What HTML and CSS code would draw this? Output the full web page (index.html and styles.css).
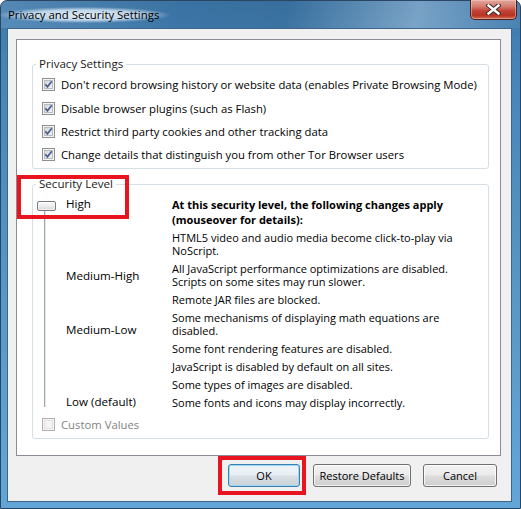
FILE: index.html
```html
<!DOCTYPE html>
<html>
<head>
<meta charset="utf-8">
<link rel="stylesheet" href="styles.css">
</head>
<body>
<div class="window">
  <div class="titlebar">
    <span class="title">Privacy and Security Settings</span>
    <span class="close">
      <svg width="15" height="11" viewBox="0 0 15 11">
        <path d="M2.5 1.5 L12.5 9.5 M12.5 1.5 L2.5 9.5" stroke="#3a2a2a" stroke-width="4.4" stroke-linecap="square"/>
        <path d="M2.5 1.5 L12.5 9.5 M12.5 1.5 L2.5 9.5" stroke="#ffffff" stroke-width="2.4" stroke-linecap="square"/>
      </svg>
    </span>
  </div>
  <div class="client">
    <div class="panel">
      <fieldset class="group privacy">
        <legend>Privacy Settings</legend>
        <label class="row"><span class="cb checked"><svg width="11" height="11" viewBox="0 0 11 11"><path d="M2.3 5.2 L4.4 7.8 L8.8 2.2" fill="none" stroke="#4c5d8c" stroke-width="1.7"/></svg></span>Don't record browsing history or website data (enables Private Browsing Mode)</label>
        <label class="row second"><span class="cb checked"><svg width="11" height="11" viewBox="0 0 11 11"><path d="M2.3 5.2 L4.4 7.8 L8.8 2.2" fill="none" stroke="#4c5d8c" stroke-width="1.7"/></svg></span>Disable browser plugins (such as Flash)</label>
        <label class="row"><span class="cb checked"><svg width="11" height="11" viewBox="0 0 11 11"><path d="M2.3 5.2 L4.4 7.8 L8.8 2.2" fill="none" stroke="#4c5d8c" stroke-width="1.7"/></svg></span>Restrict third party cookies and other tracking data</label>
        <label class="row"><span class="cb checked"><svg width="11" height="11" viewBox="0 0 11 11"><path d="M2.3 5.2 L4.4 7.8 L8.8 2.2" fill="none" stroke="#4c5d8c" stroke-width="1.7"/></svg></span>Change details that distinguish you from other Tor Browser users</label>
      </fieldset>
      <fieldset class="group security">
        <legend>Security Level</legend>
        <div class="sec-body">
          <div class="slider">
            <span class="thumb"></span>
            <span class="track"></span>
          </div>
          <div class="levels">
            <span class="lvl high">High</span>
            <span class="lvl mh">Medium-High</span>
            <span class="lvl ml">Medium-Low</span>
            <span class="lvl low">Low (default)</span>
          </div>
          <div class="desc">
            <p class="head">At this security level, the following changes apply<br>(mouseover for details):</p>
            <p class="first">HTML5 video and audio media become click-to-play via<br>NoScript.</p>
            <p>All JavaScript performance optimizations are disabled.<br>Scripts on some sites may run slower.</p>
            <p>Remote JAR files are blocked.</p>
            <p>Some mechanisms of displaying math equations are<br>disabled.</p>
            <p>Some font rendering features are disabled.</p>
            <p>JavaScript is disabled by default on all sites.</p>
            <p>Some types of images are disabled.</p>
            <p>Some fonts and icons may display incorrectly.</p>
          </div>
        </div>
        <label class="row custom"><span class="cb disabled"></span>Custom Values</label>
      </fieldset>
      <span class="mark mark-level"></span>
    </div>
    <div class="buttons">
      <button class="btn ok">OK</button>
      <button class="btn restore">Restore Defaults</button>
      <button class="btn cancel">Cancel</button>
      <span class="mark mark-ok"></span>
    </div>
  </div>
</div>
</body>
</html>
```
FILE: styles.css
```css
html, body {
  margin: 0;
  padding: 0;
}
body {
  width: 521px;
  height: 509px;
  overflow: hidden;
  background: #ffffff;
  font-family: "Open Sans", "Noto Sans", sans-serif;
  font-size: 11px;
  color: #000;
}
.window {
  box-sizing: border-box;
  width: 521px;
  height: 509px;
  border: 1px solid #2a4663;
  border-radius: 7px 7px 0 0;
  background: linear-gradient(to bottom, #3c77aa 0px, #4584b7 60px, #5898c8 300px, #62a6d8 509px);
  display: flex;
  flex-direction: column;
  padding: 0 8px 6px 6px;
  position: relative;
}
.titlebar {
  height: 27px;
  display: flex;
  align-items: flex-start;
  margin: 0 -8px 0 -6px;
  padding: 0 6px 0 6px;
  border-radius: 6px 6px 0 0;
  background: linear-gradient(100deg, rgba(255,255,255,0.12) 0%, rgba(0,0,0,0.05) 35%, rgba(0,0,0,0.08) 55%, rgba(255,255,255,0.30) 80%, rgba(255,255,255,0.05) 100%);
}
.title {
  margin: 6px 0 0 -8px;
  padding: 0 10px 0 9px;
  font-size: 11.4px;
  line-height: 16px;
  color: #000;
  background: radial-gradient(ellipse at center, rgba(235,243,250,0.95) 0%, rgba(220,234,246,0.8) 45%, rgba(200,222,240,0) 72%);
}
.close {
  margin-left: auto;
  margin-right: -3px;
  margin-top: -1px;
  width: 47px;
  height: 20px;
  box-sizing: border-box;
  border: 1px solid #4a2320;
  border-top: none;
  border-radius: 0 0 5px 5px;
  background: linear-gradient(to bottom, #e2a99f 0%, #d47a6c 35%, #c3473a 55%, #b73322 80%, #d0684e 100%);
  box-shadow: inset 0 0 0 1px rgba(255,210,200,0.45);
  display: flex;
  align-items: center;
  justify-content: center;
}
.close svg {
  display: block;
}
.client {
  flex: 1;
  box-sizing: border-box;
  background: #f0f0f0;
  border: 1px solid #3f6487;
  display: flex;
  flex-direction: column;
  position: relative;
}
.panel {
  box-sizing: border-box;
  height: 417px;
  margin: 10px 10px 0 8px;
  background: #ffffff;
  border: 1px solid #898c95;
  padding: 16px 11px 0 15px;
  display: flex;
  flex-direction: column;
  position: relative;
}
.group {
  margin: 0;
  border: 1px solid #d5dfe5;
  border-radius: 3px;
  padding: 0;
  min-width: 0;
}
.group legend {
  margin-left: 3px;
  padding: 0 3px;
  line-height: 16px;
  font-size: 11.6px;
  color: #1a1a1a;
}
.privacy {
  padding-top: 1px;
  padding-bottom: 2px;
}
.row {
  display: flex;
  align-items: center;
  height: 23px;
  padding-left: 9px;
  font-size: 11.3px;
  white-space: nowrap;
}
.row.second {
  margin-top: 1px;
}
.cb {
  box-sizing: border-box;
  width: 13px;
  height: 13px;
  border: 1px solid #8e8f8f;
  background: linear-gradient(135deg, #cbcfd5 0%, #e7e9ec 60%, #f6f6f6 100%);
  box-shadow: inset 0 0 0 1px #f4f4f4, inset 0 0 0 2px #b8bcc2;
  margin-right: 6px;
  flex: none;
  display: flex;
}
.cb svg {
  display: block;
}
.cb.disabled {
  border-color: #b1b1b1;
  background: #f4f4f4;
  box-shadow: inset 0 0 0 1px #f4f4f4, inset 0 0 0 2px #e1e1e1;
}
.security {
  margin-top: 7px;
  padding-bottom: 6px;
}
.sec-body {
  display: flex;
  padding-left: 4px;
}
.slider {
  width: 19px;
  display: flex;
  flex-direction: column;
  align-items: center;
  padding-top: 9px;
  flex: none;
}
.thumb {
  box-sizing: border-box;
  width: 19px;
  height: 10px;
  border: 1px solid #777b80;
  border-radius: 2px;
  background: linear-gradient(to bottom, #fbfbfb 0%, #ececec 50%, #d8d8d8 100%);
  box-shadow: inset 0 0 0 1px rgba(255,255,255,0.6);
}
.track {
  width: 2px;
  height: 196px;
  margin-right: 3px;
  box-sizing: border-box;
  border-left: 1px solid #a3a5a8;
  border-right: 1px solid #e6e7e8;
}
.levels {
  width: 106px;
  margin-left: 10px;
  display: flex;
  flex-direction: column;
  flex: none;
  font-size: 11.6px;
  line-height: 14px;
}
.lvl {
  display: block;
  white-space: nowrap;
}
.high { margin-top: 5px; }
.mh { margin-top: 58px; }
.ml { margin-top: 40px; }
.low { margin-top: 58px; }
.desc {
  padding-top: 5px;
  font-size: 11px;
  white-space: nowrap;
}
.desc p {
  margin: 5px 0 0 0;
  line-height: 13px;
}
.desc p.first {
  margin-top: 4px;
}
.desc p.head {
  margin: 0;
  font-weight: bold;
  font-size: 11px;
  line-height: 15px;
}
.custom {
  height: 16px;
  margin-top: 7px;
  color: #838383;
}
.buttons {
  display: flex;
  justify-content: flex-end;
  padding: 8px 14px 0 0;
  position: relative;
}
.btn {
  box-sizing: border-box;
  height: 23px;
  padding: 0;
  border: 1px solid #707070;
  border-radius: 3px;
  background: linear-gradient(to bottom, #f2f2f2 0%, #ebebeb 48%, #dddddd 52%, #cfcfcf 100%);
  box-shadow: inset 0 0 0 1px rgba(255,255,255,0.75);
  font-family: "Open Sans", "Noto Sans", sans-serif;
  font-size: 11px;
  color: #000;
}
.ok {
  width: 72px;
  margin-right: 13px;
  border-color: #3c7fb1;
  box-shadow: inset 0 0 0 1px #9ad8f5;
  background: linear-gradient(to bottom, #f0f5f8 0%, #e8eef2 48%, #d9e0e5 52%, #ccd3d8 100%);
}
.restore {
  width: 98px;
  margin-right: 12px;
}
.cancel {
  width: 74px;
}
.mark {
  position: absolute;
  box-sizing: border-box;
  border: 4px solid #e8141f;
  pointer-events: none;
}
.mark-level {
  left: 0px;
  top: 135px;
  width: 112px;
  height: 44px;
}
.mark-ok {
  left: 210px;
  top: 0px;
  width: 88px;
  height: 39px;
}
```
